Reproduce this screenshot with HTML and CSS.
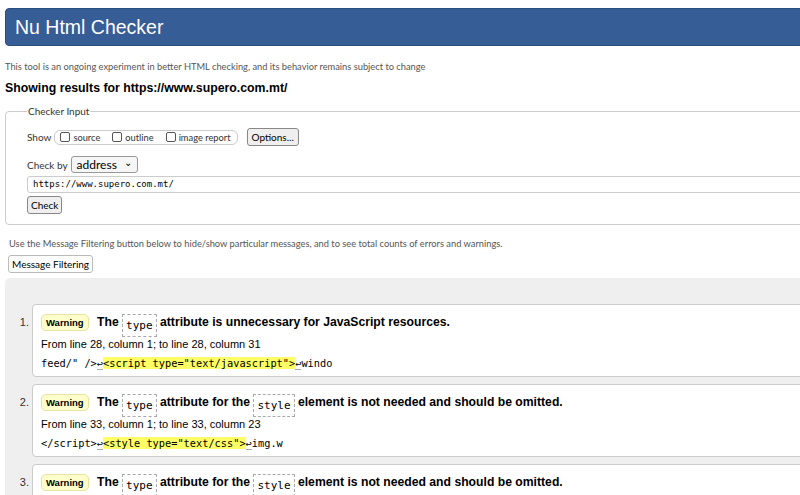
FILE: index.html
```html
<!DOCTYPE html>
<html lang="en">
<head>
    <meta charset="UTF-8">
    <title>Showing results for https://www.supero.com.mt/ - Nu Html Checker</title>
    <link rel="stylesheet" href="styles.css">
</head>
<body>
    <h1 class="banner">Nu Html Checker</h1>
    <p class="about">This tool is an ongoing experiment in better HTML checking, and its behavior remains subject to change</p>
    <h2 class="results-for">Showing results for https://www.supero.com.mt/</h2>

    <form class="checker">
        <fieldset>
            <legend>Checker Input</legend>
            <div class="row show-row">
                <span class="lbl">Show</span>
                <span class="show-group">
                    <label><span class="box"></span>source</label>
                    <label><span class="box"></span>outline</label>
                    <label><span class="box"></span>image report</label>
                </span>
                <button type="button" class="btn">Options...</button>
            </div>
            <div class="row">
                <span class="lbl">Check by</span>
                <span class="select">address <span class="chev">&#8964;</span></span>
            </div>
            <div class="doc-url">https://www.supero.com.mt/</div>
            <button type="button" class="btn check-btn">Check</button>
        </fieldset>
    </form>

    <p class="hint">Use the Message Filtering button below to hide/show particular messages, and to see total counts of errors and warnings.</p>
    <button type="button" class="btn filter-btn">Message Filtering</button>

    <div class="results">
        <ol>
            <li class="msg">
                <p class="title"><strong class="badge">Warning</strong> The <code>type</code> attribute is unnecessary for JavaScript resources.</p>
                <p class="location">From line 28, column 1; to line 28, column 31</p>
                <p class="extract"><span>feed/" /&gt;</span><span class="lf">&#8617;</span><mark>&lt;script type="text/javascript"&gt;</mark><span class="lf">&#8617;</span><span>windo</span></p>
            </li>
            <li class="msg">
                <p class="title"><strong class="badge">Warning</strong> The <code>type</code> attribute for the <code>style</code> element is not needed and should be omitted.</p>
                <p class="location">From line 33, column 1; to line 33, column 23</p>
                <p class="extract"><span>&lt;/script&gt;</span><span class="lf">&#8617;</span><mark>&lt;style type="text/css"&gt;</mark><span class="lf">&#8617;</span><span>img.w</span></p>
            </li>
            <li class="msg">
                <p class="title"><strong class="badge">Warning</strong> The <code>type</code> attribute for the <code>style</code> element is not needed and should be omitted.</p>
                <p class="location">From line 45, column 1; to line 45, column 23</p>
                <p class="extract"><span>&lt;/style&gt;</span><span class="lf">&#8617;</span><mark>&lt;style type="text/css"&gt;</mark><span class="lf">&#8617;</span><span>.wp-b</span></p>
            </li>
        </ol>
    </div>
</body>
</html>
```

FILE: styles.css
```css
html {
    overflow: hidden;
}
body {
    margin: 0;
    padding: 8px 0 0 5px;
    width: 1100px;
    font-family: "Liberation Sans", Arial, sans-serif;
    color: #000;
    background: #fff;
}
.banner {
    margin: 0;
    height: 38px;
    box-sizing: border-box;
    padding: 7px 0 0 9px;
    background-color: #365d95;
    border: 1px solid #2b4e80;
    border-radius: 4px;
    color: #fff;
    font-weight: normal;
    font-size: 19.5px;
    line-height: 22px;
}
.about {
    margin: 14px 0 0 0;
    font-family: Lato, sans-serif;
    font-size: 9.3px;
    line-height: 13px;
    color: #555;
}
.results-for {
    margin: 7px 0 0 0;
    font-size: 12.3px;
    line-height: 16px;
}
.checker fieldset {
    margin: 9px 0 0 0;
    padding: 11px 21px 10px 21px;
    border: 1px solid #ccc;
    border-radius: 4px;
    font-family: Lato, sans-serif;
    font-size: 10px;
    color: #333;
}
.checker legend {
    padding: 0 1px;
    font-size: 10px;
}
.row {
    display: flex;
    align-items: center;
    margin-bottom: 3px;
}
.show-row {
    margin-bottom: 10px;
}
.lbl {
    margin-right: 3px;
}
.show-group {
    display: flex;
    gap: 12px;
    padding: 1px 6px 1px 5px;
    border: 1px solid #ccc;
    border-radius: 6px;
    margin-right: 9px;
    font-size: 9.3px;
}
.show-group label {
    display: flex;
    align-items: center;
}
.box {
    width: 10px;
    height: 10px;
    margin-right: 3px;
    border: 1px solid #555;
    border-radius: 2px;
    box-sizing: border-box;
}
.btn {
    font-family: Lato, sans-serif;
    font-size: 10px;
    color: #000;
    background: #efefef;
    border: 1px solid #888;
    border-radius: 3px;
    padding: 1px 4px;
    line-height: 14px;
}
.select {
    display: inline-flex;
    align-items: center;
    justify-content: space-between;
    width: 67px;
    height: 17px;
    box-sizing: border-box;
    padding: 0 5px 0 5px;
    border: 1px solid #999;
    border-radius: 3px;
    background: #f6f6f6;
    color: #000;
    font-size: 12px;
}
.chev {
    font-size: 10px;
    line-height: 10px;
    margin-top: -5px;
}
.doc-url {
    height: 17px;
    box-sizing: border-box;
    padding: 0 5px;
    border: 1px solid #ccc;
    border-radius: 3px;
    font-family: "DejaVu Sans Mono", monospace;
    font-size: 9px;
    line-height: 15px;
    color: #000;
    margin-right: -60px;
}
.check-btn {
    margin-top: 3px;
    padding: 1px 3px;
}
.hint {
    margin: 12px 0 0 4px;
    font-family: Lato, sans-serif;
    font-size: 9.3px;
    line-height: 13px;
    color: #555;
}
.filter-btn {
    margin: 5px 0 0 3px;
    background: #fff;
    border-color: #bbb;
    padding: 1px 3px;
}
.results {
    margin-top: 5px;
    padding: 26px 0 10px 0;
    background: #efefef;
    border-radius: 5px 0 0 0;
}
.results ol {
    margin: 0;
    padding: 0 0 0 27px;
    font-size: 11px;
    color: #333;
}
.msg {
    margin-bottom: 7px;
    padding: 5px 8px 6px 8px;
    background: #fff;
    border: 1px solid #ccc;
    border-radius: 4px;
}
.msg::marker {
    color: #333;
    font-size: 11px;
}
.msg p {
    margin: 0;
}
.title {
    font-size: 12.2px;
    font-weight: bold;
    line-height: 24px;
    color: #000;
}
.badge {
    display: inline-block;
    padding: 0 4px;
    margin-right: 5px;
    font-size: 9.5px;
    line-height: 15px;
    background: #ffffcc;
    border: 1px solid #e6e2a0;
    border-radius: 5px;
    vertical-align: 0;
}
.title code {
    display: inline-block;
    font-family: "DejaVu Sans Mono", monospace;
    font-weight: normal;
    font-size: 11px;
    line-height: 21px;
    padding: 0 3px;
    border: 1px dashed #aaa;
    vertical-align: -3px;
}
.location {
    margin-top: 0 !important;
    font-size: 11px;
    line-height: 14px;
    color: #000;
}
.extract {
    margin-top: 5px !important;
    font-family: "DejaVu Sans Mono", monospace;
    font-size: 10.3px;
    line-height: 14px;
    color: #000;
}
.extract mark {
    background: #ffff66;
    color: #000;
}
.lf {
    border-bottom: 1px dashed #aaa;
}
```
